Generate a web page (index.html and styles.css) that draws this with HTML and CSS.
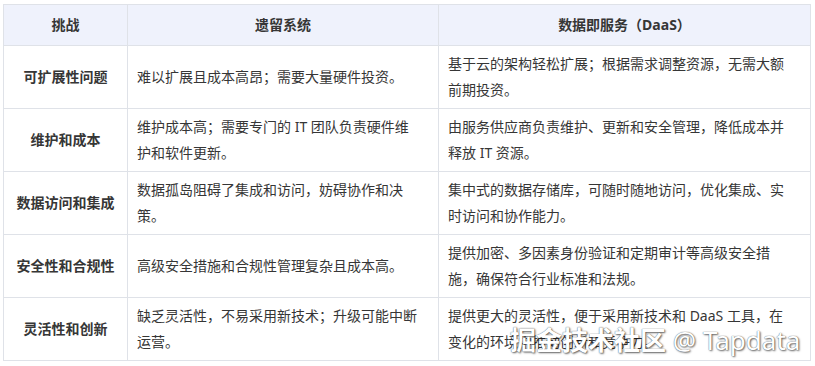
FILE: index.html
```html
<!DOCTYPE html>
<html>
    <head>
        <meta charset="utf-8">
        <link rel="stylesheet" href="styles.css">
    </head>
<body>

<div class="page">
    <table class="compare">
        <colgroup>
            <col class="c1">
            <col class="c2">
            <col class="c3">
        </colgroup>
        <tr>
            <th>挑战</th>
            <th>遗留系统</th>
            <th>数据即服务（DaaS）</th>
        </tr>
        <tr>
            <td class="topic">可扩展性问题</td>
            <td>难以扩展且成本高昂；需要大量硬件投资。</td>
            <td>基于云的架构轻松扩展；根据需求调整资源，无需大额前期投资。</td>
        </tr>
        <tr>
            <td class="topic">维护和成本</td>
            <td>维护成本高；需要专门的 IT 团队负责硬件维护和软件更新。</td>
            <td>由服务供应商负责维护、更新和安全管理，降低成本并释放 IT 资源。</td>
        </tr>
        <tr>
            <td class="topic">数据访问和集成</td>
            <td>数据孤岛阻碍了集成和访问，妨碍协作和决策。</td>
            <td>集中式的数据存储库，可随时随地访问，优化集成、实时访问和协作能力。</td>
        </tr>
        <tr>
            <td class="topic">安全性和合规性</td>
            <td>高级安全措施和合规性管理复杂且成本高。</td>
            <td>提供加密、多因素身份验证和定期审计等高级安全措施，确保符合行业标准和法规。</td>
        </tr>
        <tr>
            <td class="topic">灵活性和创新</td>
            <td>缺乏灵活性，不易采用新技术；升级可能中断运营。</td>
            <td>提供更大的灵活性，便于采用新技术和 DaaS 工具，在变化的环境中推动创新和竞争力。</td>
        </tr>
    </table>

    <!-- watermark sits over the last cell, like in the source image -->
    <div class="mark"><span class="mark-cn">掘金技术社区</span> @ Tapdata</div>
</div>

</body>
</html>
```

FILE: styles.css
```css
body{
    margin: 0;
    background-color: #fff;
    font-family: "Noto Sans", "Noto Sans CJK SC", sans-serif;
    color: #363636;
}
.page{
    position: relative;
    padding: 4px 0 0 3px;
}
.compare{
    border-collapse: collapse;
    table-layout: fixed;
    width: 807px;
    font-size: 14px;
    line-height: 26px;
}
.c1{ width: 124px; }
.c2{ width: 311px; }
.c3{ width: 372px; }
.compare th{
    background-color: #eff2fc;
    border: 1px solid #dfe2e8;
    padding: 7px 8px;
    font-weight: bold;
    text-align: center;
}
.compare td{
    border: 1px solid #dfe2e8;
    padding: 5px 19px 5px 9px;
    vertical-align: middle;
}
.compare td.topic{
    font-weight: bold;
    text-align: center;
    padding: 5px 4px;
}
.mark{
    position: absolute;
    left: 510px;
    top: 322px;
    font-size: 26px;
    line-height: 34px;
    color: #fff;
    white-space: nowrap;
    text-shadow: 0 0 1px #444, 1px 1px 2px rgba(0,0,0,.6);
}
.mark-cn{
    font-family: "Noto Sans CJK SC", sans-serif;
    font-weight: bold;
}
```
